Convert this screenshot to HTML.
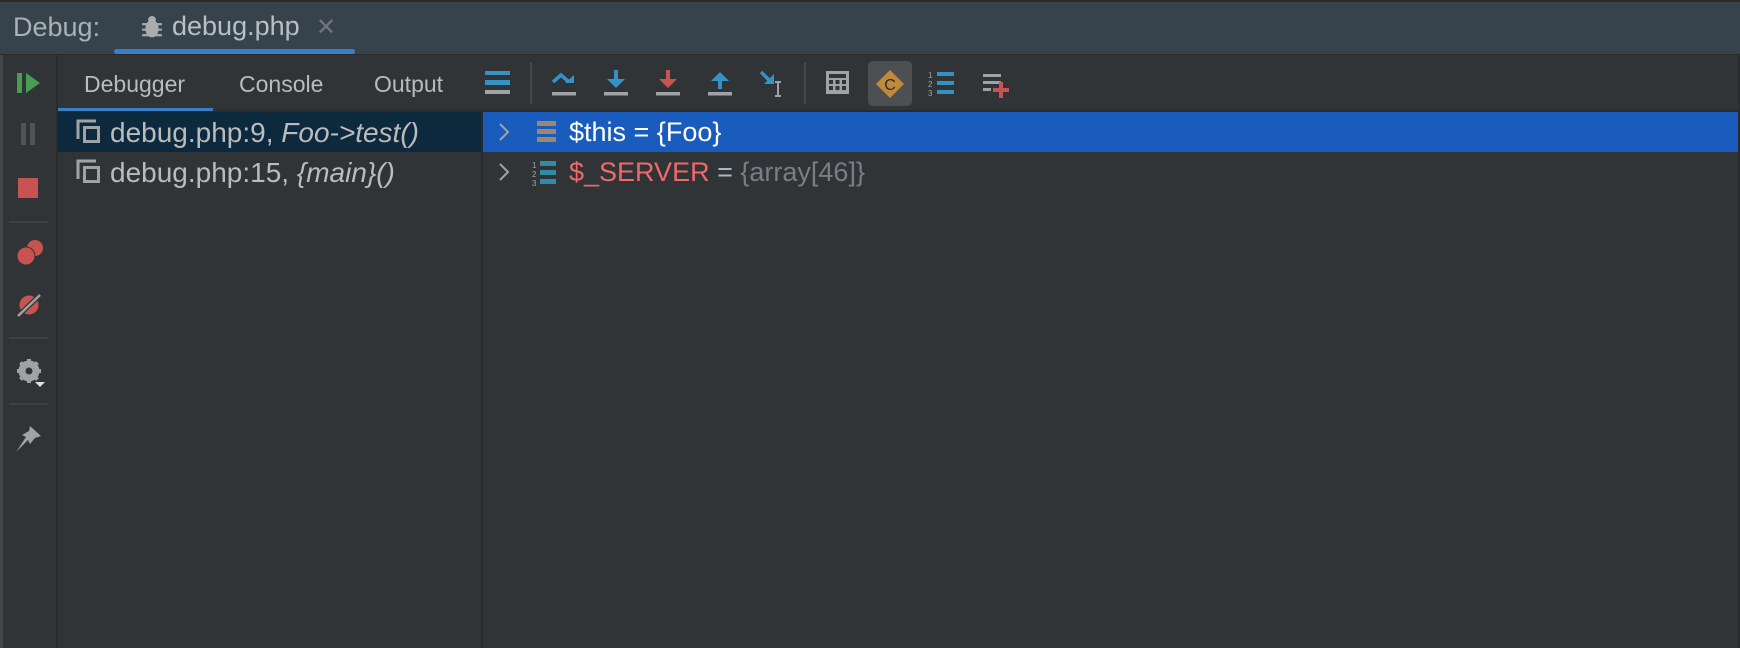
<!DOCTYPE html>
<html><head><style>
*{margin:0;padding:0;box-sizing:border-box}
body{width:1740px;height:648px;background:#2b2b2b;position:relative;overflow:hidden;font-family:"Liberation Sans",sans-serif}
.a{position:absolute}
.t{position:absolute;white-space:nowrap}
</style></head><body>
<div class="a" style="left:0;top:2px;width:1740px;height:52px;background:#36434c"></div>
<div class="t" style="left:13px;top:12px;font-size:27px;color:#a9b1b7">Debug:</div>
<svg class="a" style="left:141px;top:15px" width="22" height="25" viewBox="0 0 20 22"><ellipse cx="10" cy="12" rx="6" ry="8" fill="#a9adb0"/><circle cx="10" cy="4" r="3.5" fill="#a9adb0"/><path d="M1 8h18M1 13h18M1 18h18" stroke="#a9adb0" stroke-width="2"/></svg>
<div class="t" style="left:172px;top:11px;font-size:27px;color:#b9bfc4">debug.php</div>
<div class="t" style="left:316px;top:13px;font-size:24px;color:#6e7880">✕</div>
<div class="a" style="left:114px;top:49px;width:241px;height:5px;border-radius:3px;background:#3a7fc4"></div>
<!-- body -->
<div class="a" style="left:0;top:55px;width:1738px;height:593px;background:#313437"></div>
<div class="a" style="left:0;top:55px;width:3px;height:593px;background:#45484b"></div>
<div class="a" style="left:56px;top:55px;width:2px;height:593px;background:#2b2b2b"></div>
<div class="a" style="left:58px;top:110px;width:1680px;height:2px;background:#2b2b2b"></div>
<div class="a" style="left:481px;top:112px;width:2px;height:536px;background:#2b2b2b"></div>
<!-- sidebar -->
<svg class="a" style="left:17px;top:72px" width="24" height="22"><rect x="0" y="1" width="5" height="20" fill="#499c54"/><path d="M9 1L23 11L9 21Z" fill="#499c54"/></svg>
<div class="a" style="left:21px;top:123px;width:5px;height:22px;background:#515355"></div>
<div class="a" style="left:30px;top:123px;width:5px;height:22px;background:#515355"></div>
<div class="a" style="left:18px;top:178px;width:20px;height:20px;background:#c75450"></div>
<div class="a" style="left:9px;top:221px;width:39px;height:2px;background:#3e4144"></div>
<svg class="a" style="left:16px;top:239px" width="28" height="28"><circle cx="19" cy="9" r="8" fill="#c75450"/><circle cx="10" cy="17" r="9" fill="#c75450" stroke="#313437" stroke-width="1"/></svg>
<svg class="a" style="left:16px;top:293px" width="26" height="24"><circle cx="13" cy="12" r="9.5" fill="#c75450"/><path d="M2 23L24 2" stroke="#313437" stroke-width="5"/><path d="M2 23L24 2" stroke="#a0a3a6" stroke-width="2.5"/></svg>
<div class="a" style="left:9px;top:337px;width:39px;height:2px;background:#3e4144"></div>
<svg class="a" style="left:16px;top:358px" width="32" height="32"><circle cx="13" cy="13" r="8" fill="none" stroke="#a0a3a6" stroke-width="5"/><path d="M13 1v24M1 13h24M4.5 4.5l17 17M21.5 4.5l-17 17" stroke="#a0a3a6" stroke-width="4"/><circle cx="13" cy="13" r="3.5" fill="#313437"/><path d="M19 24h10l-5 5z" fill="#e0e0e0"/></svg>
<div class="a" style="left:9px;top:403px;width:39px;height:2px;background:#3e4144"></div>
<svg class="a" style="left:13px;top:424px" width="30" height="30"><path d="M17 2L28 12L22 14L17 20L15 16L3 28L13 13L9 11L16 7Z" fill="#a0a3a6"/></svg>
<!-- tabs -->
<div class="t" style="left:84px;top:71px;font-size:23px;color:#bbbbbb">Debugger</div>
<div class="t" style="left:239px;top:71px;font-size:23px;color:#bbbbbb">Console</div>
<div class="t" style="left:374px;top:71px;font-size:23px;color:#bbbbbb">Output</div>
<div class="a" style="left:58px;top:108px;width:155px;height:3px;background:#3a7fc4"></div>
<!-- toolbar -->
<svg class="a" style="left:485px;top:71px" width="25" height="24"><rect x="0" y="0" width="25" height="4" fill="#3592c4"/><rect x="0" y="9" width="25" height="5" fill="#3592c4"/><rect x="0" y="19" width="25" height="4" fill="#a0a3a6"/></svg>
<div class="a" style="left:530px;top:62px;width:2px;height:42px;background:#45484b"></div>
<svg class="a" style="left:551px;top:70px" width="26" height="28"><path d="M2 12L10 5L18 12" stroke="#3592c4" stroke-width="3.5" fill="none"/><path d="M14 13h9v-8z" fill="#3592c4"/><rect x="1" y="22" width="24" height="3.5" fill="#a0a3a6"/></svg>
<svg class="a" style="left:603px;top:70px" width="26" height="28"><rect x="11" y="0" width="4" height="10" fill="#3592c4"/><path d="M4 9h18l-9 9z" fill="#3592c4"/><rect x="1" y="22" width="24" height="3.5" fill="#a0a3a6"/></svg>
<svg class="a" style="left:655px;top:70px" width="26" height="28"><rect x="11" y="0" width="4" height="10" fill="#c75450"/><path d="M4 9h18l-9 9z" fill="#c75450"/><rect x="1" y="22" width="24" height="3.5" fill="#a0a3a6"/></svg>
<svg class="a" style="left:707px;top:70px" width="26" height="28"><path d="M4 11h18l-9-9z" fill="#3592c4"/><rect x="11" y="10" width="4" height="9" fill="#3592c4"/><rect x="1" y="22" width="24" height="3.5" fill="#a0a3a6"/></svg>
<svg class="a" style="left:759px;top:70px" width="28" height="30"><path d="M2 2L11 11" stroke="#3592c4" stroke-width="3.5"/><path d="M5 14h10v-10z" fill="#3592c4"/><path d="M16 12h6M19 12v14M16 26h6" stroke="#a0a3a6" stroke-width="2"/></svg>
<div class="a" style="left:804px;top:62px;width:2px;height:42px;background:#45484b"></div>
<svg class="a" style="left:826px;top:71px" width="24" height="24"><rect x="0" y="0" width="23" height="23" fill="#a0a3a6"/><rect x="3" y="3" width="17" height="4" fill="#313437"/><g fill="#313437"><rect x="3" y="9" width="4" height="4"/><rect x="9.5" y="9" width="4" height="4"/><rect x="16" y="9" width="4" height="4"/><rect x="3" y="15" width="4" height="4"/><rect x="9.5" y="15" width="4" height="4"/><rect x="16" y="15" width="4" height="4"/></g></svg>
<div class="a" style="left:868px;top:61px;width:44px;height:45px;border-radius:5px;background:#4c5052"></div>
<svg class="a" style="left:874px;top:68px" width="32" height="32"><path d="M16 2L30 16L16 30L2 16Z" fill="#c08a3e"/><text x="16" y="22" text-anchor="middle" font-family="Liberation Sans" font-size="16" fill="#2b2b2b">C</text></svg>
<svg class="a" style="left:928px;top:70px" width="28" height="28"><text x="0" y="8" font-size="8" fill="#a0a3a6" font-family="Liberation Sans">1</text><text x="0" y="17" font-size="8" fill="#a0a3a6" font-family="Liberation Sans">2</text><text x="0" y="26" font-size="8" fill="#a0a3a6" font-family="Liberation Sans">3</text><rect x="9" y="2" width="17" height="4" fill="#3592c4"/><rect x="9" y="11" width="17" height="4" fill="#3592c4"/><rect x="9" y="20" width="17" height="4" fill="#3592c4"/></svg>
<svg class="a" style="left:983px;top:72px" width="28" height="28"><rect x="0" y="2" width="18" height="3" fill="#a0a3a6"/><rect x="0" y="9" width="18" height="3" fill="#a0a3a6"/><rect x="0" y="16" width="8" height="3" fill="#a0a3a6"/><rect x="10" y="16" width="16" height="4" fill="#c75450"/><rect x="16" y="10" width="4" height="16" fill="#c75450"/></svg>
<!-- frames -->
<div class="a" style="left:58px;top:112px;width:423px;height:40px;background:#0d293e"></div>
<svg class="a" style="left:75px;top:118px" width="28" height="28"><path d="M3 21V3h18" stroke="#a0a3a6" stroke-width="3" fill="none"/><rect x="9.5" y="9.5" width="14" height="14" stroke="#a0a3a6" stroke-width="3" fill="none"/></svg>
<div class="t" style="left:110px;top:117px;font-size:28px;color:#bbbbbb">debug.php:9, <i>Foo-&gt;test()</i></div>
<svg class="a" style="left:75px;top:158px" width="28" height="28"><path d="M3 21V3h18" stroke="#a0a3a6" stroke-width="3" fill="none"/><rect x="9.5" y="9.5" width="14" height="14" stroke="#a0a3a6" stroke-width="3" fill="none"/></svg>
<div class="t" style="left:110px;top:157px;font-size:28px;color:#bbbbbb">debug.php:15, <i>{main}()</i></div>
<!-- variables -->
<div class="a" style="left:483px;top:112px;width:1255px;height:40px;background:#1a5cbd"></div>
<svg class="a" style="left:497px;top:122px" width="14" height="20"><path d="M3 2L11 10L3 18" stroke="#a0a3a6" stroke-width="2" fill="none"/></svg>
<svg class="a" style="left:537px;top:121px" width="20" height="22"><rect x="0" y="0" width="19" height="5" fill="#a0896a"/><rect x="0" y="8" width="19" height="5" fill="#a0896a"/><rect x="0" y="16" width="19" height="5" fill="#a0896a"/></svg>
<div class="t" style="left:569px;top:117px;font-size:27px;color:#ffffff">$this = {Foo}</div>
<svg class="a" style="left:497px;top:162px" width="14" height="20"><path d="M3 2L11 10L3 18" stroke="#a0a3a6" stroke-width="2" fill="none"/></svg>
<svg class="a" style="left:532px;top:160px" width="26" height="28"><text x="0" y="8" font-size="8" fill="#a0a3a6" font-family="Liberation Sans">1</text><text x="0" y="17" font-size="8" fill="#a0a3a6" font-family="Liberation Sans">2</text><text x="0" y="26" font-size="8" fill="#a0a3a6" font-family="Liberation Sans">3</text><rect x="8" y="1" width="16" height="5" fill="#2f8ba6"/><rect x="8" y="10" width="16" height="5" fill="#2f8ba6"/><rect x="8" y="19" width="16" height="5" fill="#2f8ba6"/></svg>
<div class="t" style="left:569px;top:157px;font-size:27px;color:#f0686a">$_SERVER <span style="color:#a9b7c6">=</span> <span style="color:#7a7e82">{array[46]}</span></div>
</body></html>
